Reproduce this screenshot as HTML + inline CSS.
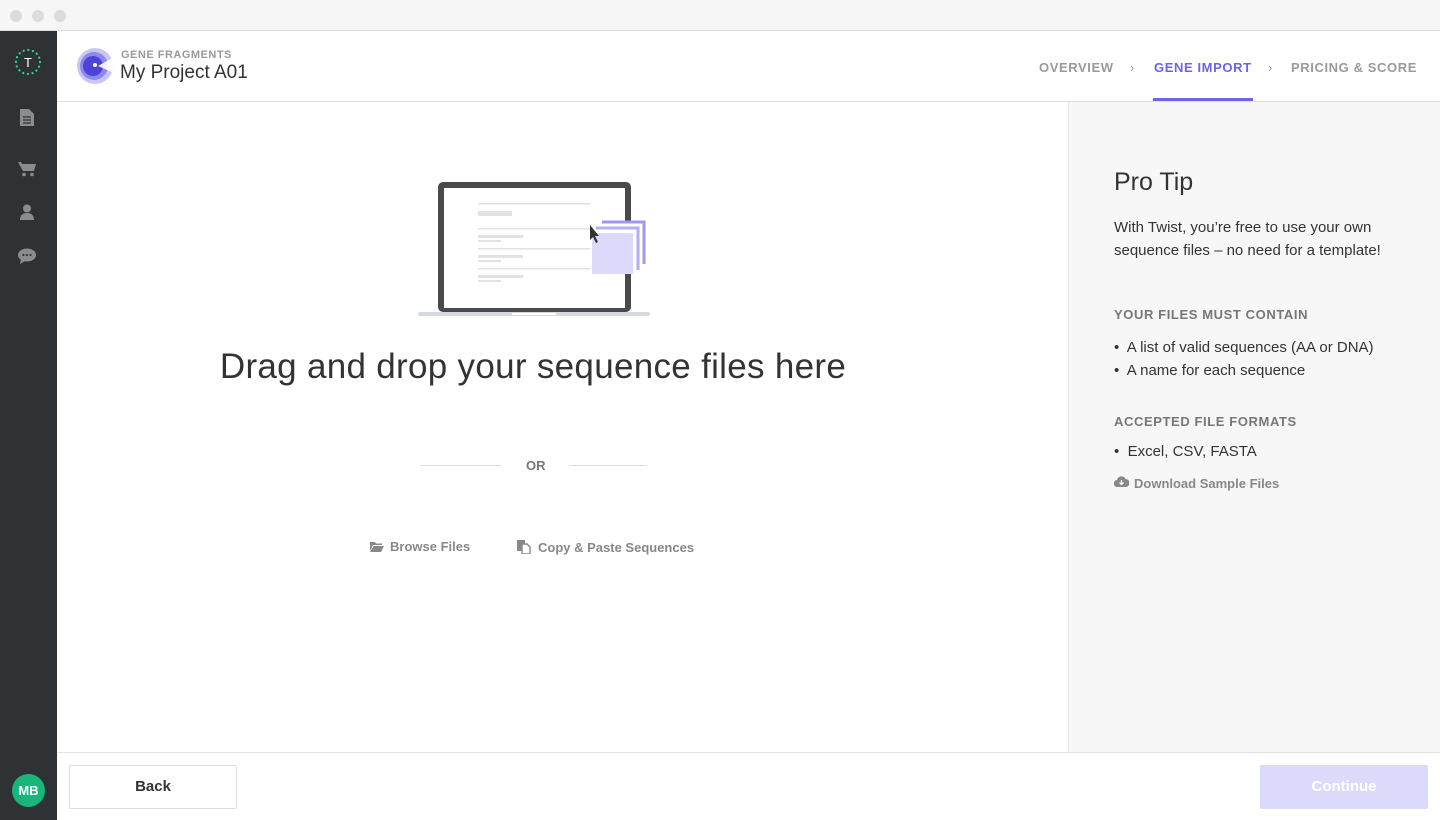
<!DOCTYPE html>
<html><head><style>
*{box-sizing:border-box;margin:0;padding:0}
body{width:1440px;height:820px;position:relative;overflow:hidden;background:#fff;font-family:"Liberation Sans",sans-serif;color:#333}
.abs{position:absolute}
.chrome{left:0;top:0;width:1440px;height:31px;background:#f6f6f6;border-bottom:1px solid #ddd}
.dot{top:10px;width:12px;height:12px;border-radius:50%;background:#dcdcdc}
.side{left:0;top:31px;width:57px;height:789px;background:#2e3235}
.hdr{left:57px;top:31px;width:1383px;height:71px;border-bottom:1px solid #e0e0e0;background:#fff}
.nav{top:60px;font-size:13px;font-weight:bold;letter-spacing:.6px;color:#9a9a9a}
.right{left:1068px;top:102px;width:372px;height:650px;background:#f7f7f7;border-left:1px solid #e3e3e3}
.foot{left:57px;top:752px;width:1383px;height:68px;border-top:1px solid #e3e3e3;background:#fff}
.h{font-size:13px;font-weight:bold;letter-spacing:.6px;color:#777}
.t{font-size:15px;color:#333}
</style></head><body>
<div class="abs chrome"></div>
<div class="abs dot" style="left:10px"></div><div class="abs dot" style="left:32px"></div><div class="abs dot" style="left:54px"></div>
<div class="abs side">
<svg class="abs" style="left:14px;top:17px" width="28" height="28" viewBox="0 0 28 28"><circle cx="14" cy="14" r="12" fill="none" stroke="#2ed3a0" stroke-width="2.2" stroke-dasharray="0.1 4.6" stroke-linecap="round"/><text x="14" y="19" text-anchor="middle" font-family="Liberation Sans" font-size="13" fill="#fff">T</text></svg>
<svg class="abs" style="left:20px;top:78px" width="14" height="17" viewBox="0 0 14 17"><path d="M0 0h9l5 5v12H0z" fill="#8a8d8f"/><path d="M3 8h8M3 11h8M3 14h8" stroke="#2e3235" stroke-width="1.2"/></svg>
<svg class="abs" style="left:18px;top:130px" width="18" height="16" viewBox="0 0 18 16"><path d="M0 1h3l1 2h14l-2 7H5z" fill="#8a8d8f"/><circle cx="6" cy="13.5" r="1.8" fill="#8a8d8f"/><circle cx="14" cy="13.5" r="1.8" fill="#8a8d8f"/></svg>
<svg class="abs" style="left:20px;top:173px" width="14" height="16" viewBox="0 0 14 16"><circle cx="7" cy="4.5" r="4" fill="#8a8d8f"/><path d="M0 16c0-5 3-7 7-7s7 2 7 7z" fill="#8a8d8f"/></svg>
<svg class="abs" style="left:18px;top:217px" width="18" height="16" viewBox="0 0 18 16"><ellipse cx="9" cy="7" rx="9" ry="6.5" fill="#8a8d8f"/><path d="M3 11l-1 5 5-3z" fill="#8a8d8f"/><circle cx="5.5" cy="7" r="1.1" fill="#2e3235"/><circle cx="9" cy="7" r="1.1" fill="#2e3235"/><circle cx="12.5" cy="7" r="1.1" fill="#2e3235"/></svg>
<div class="abs" style="left:12px;top:743px;width:33px;height:33px;border-radius:50%;background:#17b67a;color:#fff;font-weight:bold;font-size:13px;line-height:33px;text-align:center">MB</div>
</div>
<div class="abs hdr">
<svg class="abs" style="left:19px;top:16px" width="38" height="38" viewBox="0 0 38 38"><circle cx="19" cy="19" r="18" fill="#c9c6f5"/><circle cx="18" cy="19" r="14" fill="#8e88ec"/><circle cx="17" cy="19" r="10" fill="#4d43d6"/><path d="M38 10 L22 19 L38 26z" fill="#fff" opacity=".9"/><circle cx="19" cy="18" r="2" fill="#fff"/></svg>
<div class="abs" style="left:64px;top:18px;font-size:11px;font-weight:bold;letter-spacing:.5px;color:#9a9a9a">GENE FRAGMENTS</div>
<div class="abs" style="left:63px;top:31px;font-size:19px;color:#333">My Project A01</div>
</div>
<div class="abs nav" style="left:1039px">OVERVIEW</div>
<div class="abs nav" style="left:1130px;font-weight:normal">›</div>
<div class="abs nav" style="left:1154px;color:#6c63e8">GENE IMPORT</div>
<div class="abs" style="left:1153px;top:98px;width:100px;height:3px;background:#6c63e8"></div>
<div class="abs nav" style="left:1268px;font-weight:normal">›</div>
<div class="abs nav" style="left:1291px">PRICING &amp; SCORE</div>

<svg class="abs" style="left:416px;top:180px" width="236" height="140" viewBox="0 0 236 140">
<rect x="2" y="132" width="232" height="4" rx="2" fill="#d3dbe0"/>
<rect x="22" y="2" width="193" height="130" rx="5" fill="#4a4a4a"/>
<rect x="28" y="8" width="181" height="120" fill="#fff"/>
<rect x="96" y="133" width="44" height="2" fill="#fff"/>
<g fill="#e2e2e2"><rect x="62" y="23" width="112" height="1.5"/><rect x="62" y="31" width="34" height="5"/><rect x="62" y="48" width="112" height="1.5"/><rect x="62" y="55" width="45" height="3"/><rect x="62" y="60" width="23" height="2"/><rect x="62" y="68" width="112" height="1.5"/><rect x="62" y="75" width="45" height="3"/><rect x="62" y="80" width="23" height="2"/><rect x="62" y="88" width="112" height="1.5"/><rect x="62" y="95" width="45" height="3"/><rect x="62" y="100" width="23" height="2"/></g>
<rect x="182" y="42" width="46" height="44" fill="#fff"/>
<path d="M186 42h42v42" fill="none" stroke="#9f98f2" stroke-width="3"/>
<path d="M180 48h42v42" fill="none" stroke="#b4aef5" stroke-width="3"/>
<rect x="176" y="53" width="41" height="41" fill="#dcdafb"/>
<path d="M174 45v15l3-3 3 6 2-1-3-6h4z" fill="#333"/>
</svg>
<div class="abs" style="left:57px;top:347px;width:952px;text-align:center;font-size:35px;letter-spacing:.3px;color:#333">Drag and drop your sequence files here</div>
<div class="abs" style="left:420px;top:465px;width:82px;height:1px;background:#ddd"></div>
<div class="abs" style="left:569px;top:465px;width:78px;height:1px;background:#ddd"></div>
<div class="abs" style="left:526px;top:458px;font-size:13px;font-weight:bold;color:#777">OR</div>
<svg class="abs" style="left:370px;top:541px" width="14" height="11" viewBox="0 0 14 11"><path d="M0 1h5l1 1.5h6V4H3L0 10z" fill="#888"/><path d="M3.5 5H14l-3 6H0z" fill="#888"/></svg>
<div class="abs" style="left:390px;top:539px;font-size:13px;font-weight:bold;color:#888">Browse Files</div>
<svg class="abs" style="left:517px;top:540px" width="14" height="14" viewBox="0 0 14 14"><rect x="0" y="0" width="8" height="11" fill="#888"/><path d="M5 4h5l3 3v7H5z" fill="#fff" stroke="#888" stroke-width="1.4"/></svg>
<div class="abs" style="left:538px;top:540px;font-size:13px;font-weight:bold;color:#888">Copy &amp; Paste Sequences</div>

<div class="abs right">
<div class="abs" style="left:45px;top:66px;font-size:25px;color:#333">Pro Tip</div>
<div class="abs t" style="left:45px;top:114px;line-height:23px;width:300px">With Twist, you’re free to use your own sequence files – no need for a template!</div>
<div class="abs h" style="left:45px;top:205px">YOUR FILES MUST CONTAIN</div>
<div class="abs t" style="left:45px;top:234px;line-height:23px">•&nbsp; A list of valid sequences (AA or DNA)<br>•&nbsp; A name for each sequence</div>
<div class="abs h" style="left:45px;top:312px">ACCEPTED FILE FORMATS</div>
<div class="abs t" style="left:45px;top:341px">•&nbsp; Excel, CSV, FASTA</div>
<svg class="abs" style="left:45px;top:374px" width="15" height="11" viewBox="0 0 15 11"><path d="M3.5 11a3.5 3.5 0 0 1-.5-7 4.5 4.5 0 0 1 8.5-1A4 4 0 0 1 11.5 11z" fill="#888"/><path d="M7.5 4v4M5.5 6.5l2 2 2-2" stroke="#f7f7f7" stroke-width="1.3" fill="none"/></svg>
<div class="abs" style="left:65px;top:374px;font-size:13px;font-weight:bold;color:#888">Download Sample Files</div>
</div>

<div class="abs foot">
<div class="abs" style="left:12px;top:12px;width:168px;height:44px;border:1px solid #ddd;border-radius:2px;text-align:center;line-height:42px;font-size:15px;font-weight:bold;color:#333">Back</div>
<div class="abs" style="left:1203px;top:12px;width:168px;height:44px;background:#dcdafb;border-radius:2px;text-align:center;line-height:44px;font-size:15px;font-weight:bold;color:#fff">Continue</div>
</div>
</body></html>
